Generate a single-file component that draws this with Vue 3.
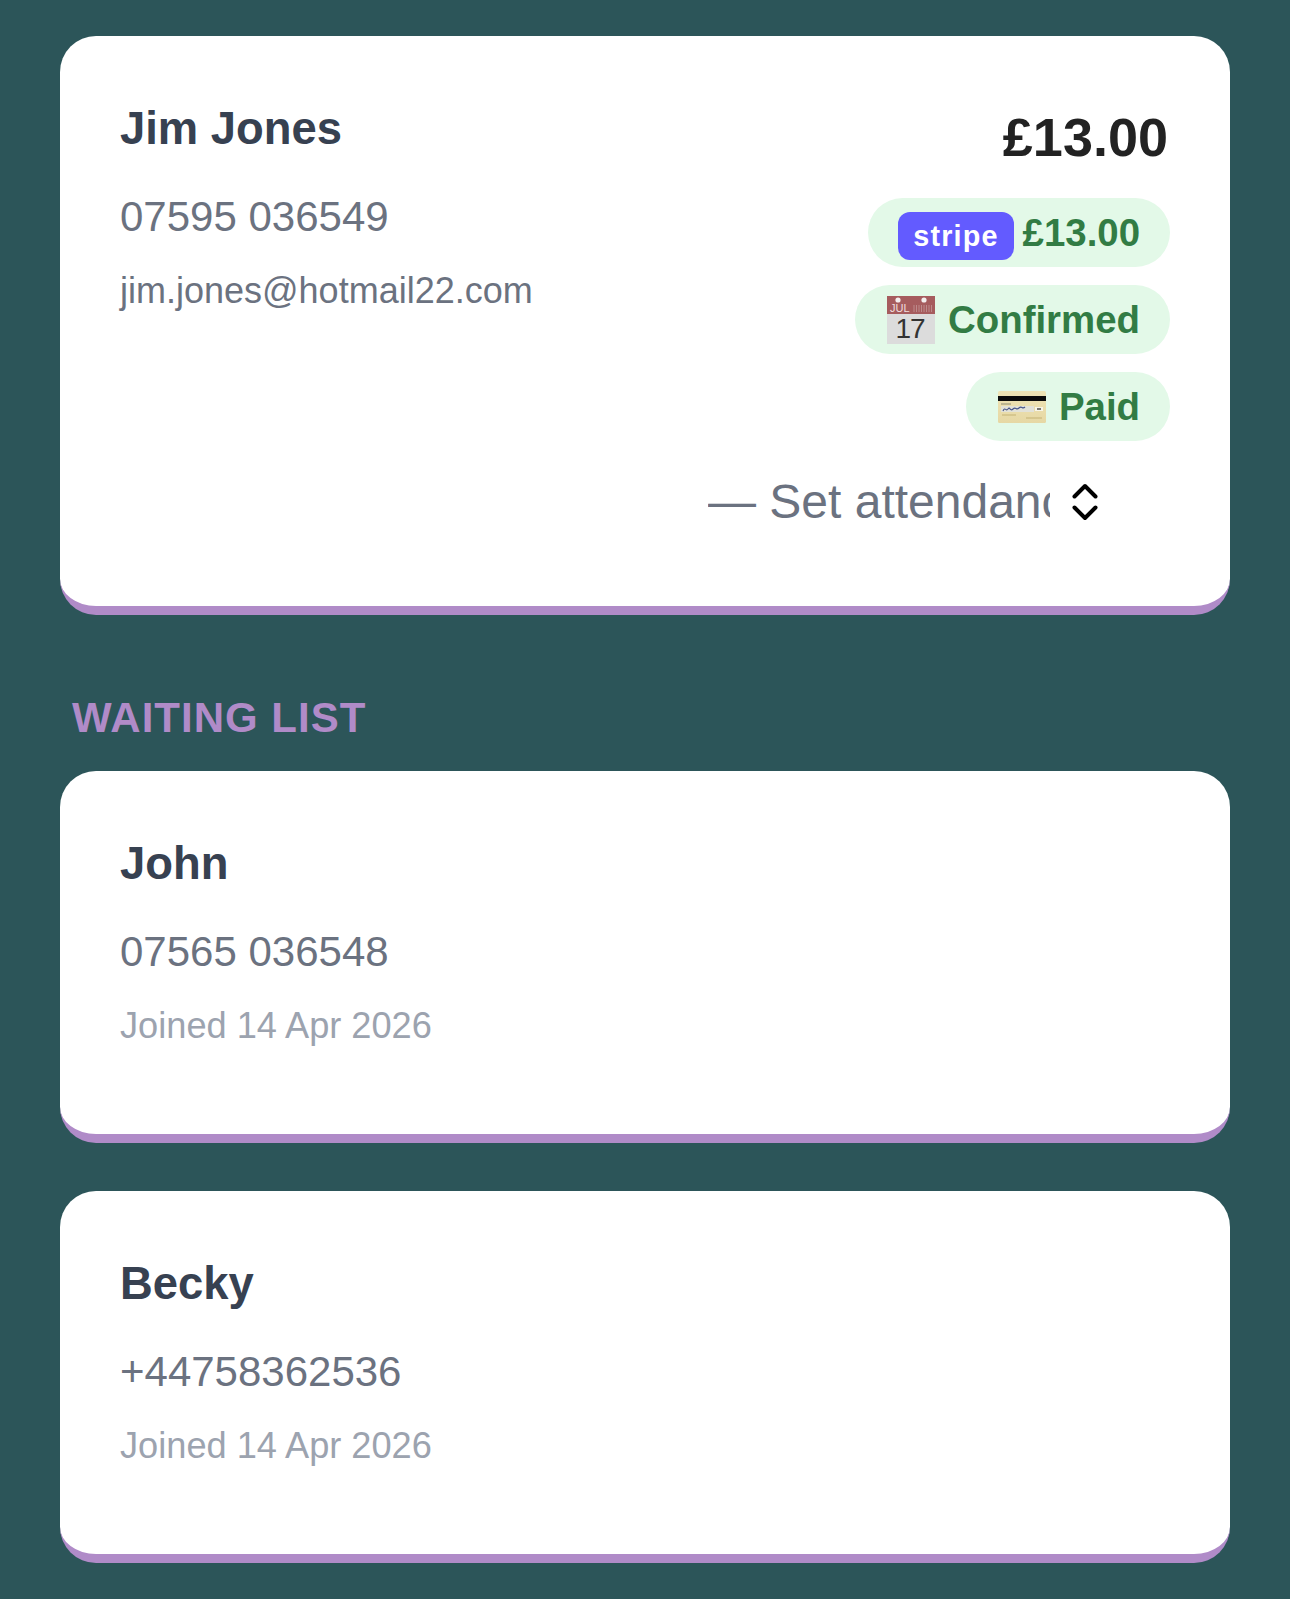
<script setup>
const waiting = [
  { name: 'John', phone: '07565 036548', joined: 'Joined 14 Apr 2026' },
  { name: 'Becky', phone: '+44758362536', joined: 'Joined 14 Apr 2026' }
]
</script>

<template>
  <main class="page">
    <section class="card booking">
      <div class="person">
        <h2 class="name">Jim Jones</h2>
        <p class="phone">07595 036549</p>
        <p class="email">jim.jones@hotmail22.com</p>
      </div>
      <div class="status">
        <div class="amount">£13.00</div>
        <div class="pill">
          <span class="stripe">stripe</span>
          <span class="pill-amount">£13.00</span>
        </div>
        <div class="pill">
          <svg class="calendar" viewBox="0 0 48 48" aria-hidden="true">
            <rect x="0" y="0" width="48" height="18" fill="#a65c5e" />
            <rect x="0" y="18" width="48" height="30" fill="#dcdcdc" />
            <circle cx="11" cy="4" r="2.6" fill="#f4eeee" />
            <circle cx="37" cy="4" r="2.6" fill="#f4eeee" />
            <text x="3" y="16" class="cal-month">JUL</text>
            <path d="M27 9v7M29.500 9v7M32 9v7M34.500 9v7M37 9v7M39.500 9v7M42 9v7M44.500 9v7" stroke="#bd8a8b" stroke-width="1" />
            <text x="23" y="42" class="cal-day">17</text>
          </svg>
          <span class="pill-text">Confirmed</span>
        </div>
        <div class="pill">
          <svg class="credit" viewBox="0 0 48 32" aria-hidden="true">
            <defs>
              <linearGradient id="goldcard" x1="0" y1="0" x2="0" y2="1">
                <stop offset="0" stop-color="#efe4b6" />
                <stop offset="1" stop-color="#e6d8a4" />
              </linearGradient>
            </defs>
            <rect x="0" y="0" width="48" height="32" rx="1.500" fill="url(#goldcard)" />
            <rect x="0" y="5" width="48" height="5" fill="#0c0c0c" />
            <path d="M3 13h10" stroke="#8b8a72" stroke-width="1" />
            <rect x="3" y="15" width="33" height="6" fill="#e2e2d8" />
            <path d="M5 20c2-5 3 1 5-2s2 3 5 0 3 2 6-1 3 2 6-1" fill="none" stroke="#46548a" stroke-width="1.100" />
            <rect x="37" y="16" width="8" height="4" fill="#f7f5e8" />
            <path d="M39 18h4" stroke="#222" stroke-width="1.200" />
            <path d="M4 24h14M28 27h16" stroke="#c4b374" stroke-width="1" />
          </svg>
          <span class="pill-text">Paid</span>
        </div>
        <div class="attendance">
          <span class="attendance-label">— Set attendance</span>
          <svg class="chevrons" viewBox="0 0 26 38" aria-hidden="true">
            <path d="M2.500 13.500 13 3 23.500 13.500M2.500 24.500 13 35 23.500 24.500" fill="none" stroke="#000" stroke-width="4" stroke-linecap="round" stroke-linejoin="round" />
          </svg>
        </div>
      </div>
    </section>

    <h3 class="section-title">WAITING LIST</h3>

    <div class="waiting">
      <section v-for="entry in waiting" :key="entry.name" class="card">
        <h2 class="name">{{ entry.name }}</h2>
        <p class="phone">{{ entry.phone }}</p>
        <p class="joined">{{ entry.joined }}</p>
      </section>
    </div>
  </main>
</template>

<style scoped>
.page {
  box-sizing: border-box;
  min-height: 1599px;
  padding: 36px 60px;
  background: #2c5559;
  font-family: "Liberation Sans", Arial, sans-serif;
}

.card {
  box-sizing: border-box;
  padding: 60px;
  background: #fff;
  border-bottom: 9px solid #b08bc8;
  border-radius: 36px;
}

.booking {
  display: flex;
  justify-content: space-between;
  height: 579px;
}

.name {
  margin: 3px 0 0;
  font-size: 45.400px;
  line-height: 60px;
  font-weight: 700;
  color: #374151;
}

.phone {
  margin: 28px 0 0;
  font-size: 42px;
  line-height: 60px;
  color: #6b7280;
}

.email {
  margin: 17px 0 0;
  font-size: 36px;
  line-height: 54px;
  color: #6b7280;
}

.joined {
  margin: 17px 0 0;
  font-size: 36.200px;
  line-height: 54px;
  color: #9ca3af;
}

.status {
  display: flex;
  flex-direction: column;
  align-items: flex-end;
  gap: 18px;
}

.amount {
  margin: 1px 2px 2px 0;
  font-size: 54px;
  line-height: 81px;
  font-weight: 700;
  color: #222;
}

.pill {
  display: flex;
  align-items: center;
  height: 69px;
  padding: 0 30px;
  border-radius: 35px;
  background: #e3f9e8;
  font-size: 38.400px;
  font-weight: 700;
  color: #327c44;
}

.stripe {
  display: flex;
  align-items: center;
  justify-content: center;
  width: 116px;
  height: 48px;
  margin-top: 7px;
  border-radius: 12px;
  background: #635bff;
  color: #fff;
  font-size: 28.800px;
  letter-spacing: 1.200px;
}

.pill-amount {
  margin-left: 8.600px;
}

.pill-text {
  margin-left: 13px;
}

.calendar {
  width: 48px;
  height: 48px;
  margin-left: 2px;
}

.credit {
  width: 48px;
  height: 32px;
  margin-left: 2px;
}

.cal-month {
  font-size: 11px;
  font-weight: 400;
  fill: #f0dede;
  font-family: "Liberation Sans", Arial, sans-serif;
}

.cal-day {
  font-size: 28px;
  font-weight: 400;
  fill: #333;
  text-anchor: middle;
  letter-spacing: -1px;
  font-family: "Liberation Sans", Arial, sans-serif;
}

.attendance {
  display: flex;
  align-items: center;
  gap: 22px;
  margin-top: 16px;
  margin-right: 72px;
}

.attendance-label {
  width: 342px;
  overflow: hidden;
  white-space: nowrap;
  font-size: 48px;
  line-height: 54px;
  color: #6b7280;
}

.chevrons {
  width: 26px;
  height: 38px;
}

.section-title {
  margin: 76px 0 0 12px;
  font-size: 42px;
  line-height: 54px;
  font-weight: 700;
  letter-spacing: 1px;
  color: #b08bc8;
}

.waiting {
  display: flex;
  flex-direction: column;
  gap: 48px;
  margin-top: 26px;
}

.waiting .card {
  height: 372px;
}
</style>

<style>
html,
body {
  background: #2c5559;
}
</style>
